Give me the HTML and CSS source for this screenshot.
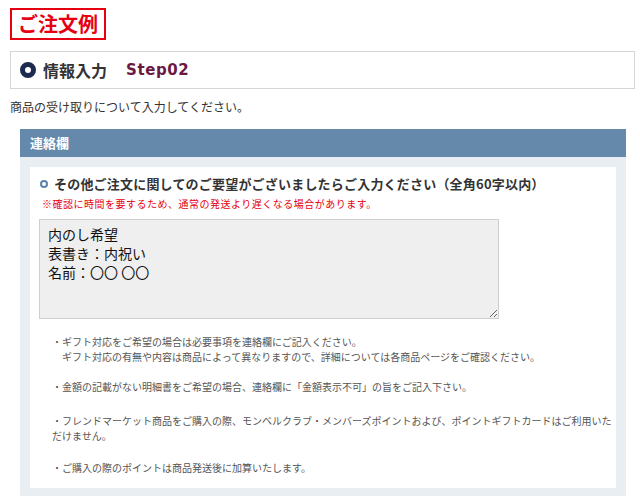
FILE: index.html
```html
<!DOCTYPE html>
<html lang="ja">
<head>
<meta charset="utf-8">
<link rel="stylesheet" href="styles.css">
</head>
<body>
<div class="page">
  <div class="title">ご注文例</div>
  <div class="step">
    <span class="step-icon"></span>
    <span class="step-name">情報入力</span>
    <span class="step-no">Step02</span>
  </div>
  <p class="lead">商品の受け取りについて入力してください。</p>
  <div class="panel">
    <div class="panel-head">連絡欄</div>
    <div class="panel-body">
      <div class="inner">
        <div class="q-title"><span class="dot"></span><span>その他ご注文に関してのご要望がございましたらご入力ください（全角60字以内）</span></div>
        <div class="q-note">※確認に時間を要するため、通常の発送より遅くなる場合があります。</div>
        <textarea class="memo">内のし希望
表書き：内祝い
名前：〇〇 〇〇</textarea>
        <div class="notes">
          <p class="n1">・ギフト対応をご希望の場合は必要事項を連絡欄にご記入ください。<br>　ギフト対応の有無や内容は商品によって異なりますので、詳細については各商品ページをご確認ください。</p>
          <p class="n2">・金額の記載がない明細書をご希望の場合、連絡欄に「金額表示不可」の旨をご記入下さい。</p>
          <p class="n3">・フレンドマーケット商品をご購入の際、モンベルクラブ・メンバーズポイントおよび、ポイントギフトカードはご利用いただけません。</p>
          <p class="n4">・ご購入の際のポイントは商品発送後に加算いたします。</p>
        </div>
      </div>
    </div>
  </div>
</div>
</body>
</html>
```
FILE: styles.css
```css
html, body {
  margin: 0;
  padding: 0;
  background: #fff;
}
body {
  font-family: "Noto Sans CJK JP", "Noto Sans", sans-serif;
  color: #333;
}
.page {
  padding: 8px 5px 0 10px;
}
.title {
  display: inline-block;
  border: 2px solid #e60012;
  color: #e60012;
  font-size: 20px;
  font-weight: bold;
  line-height: 28px;
  padding: 0 6px;
}
.step {
  margin-top: 11px;
  box-sizing: border-box;
  width: 625px;
  height: 38px;
  border: 1px solid #d6d6d6;
  display: flex;
  align-items: center;
  padding-left: 9px;
}
.step-icon {
  width: 16px;
  height: 16px;
  border-radius: 50%;
  box-sizing: border-box;
  border: 5px solid #1b2a4e;
  background: #fff;
  flex: none;
}
.step-name {
  margin-left: 7px;
  font-size: 16px;
  font-weight: bold;
  color: #333;
}
.step-no {
  margin-left: 19px;
  font-family: "DejaVu Sans", sans-serif;
  font-size: 15px;
  font-weight: bold;
  color: #6b1942;
  letter-spacing: 0.6px;
}
.lead {
  margin: 9px 0 0;
  font-size: 12px;
  line-height: 18px;
  color: #333;
}
.panel {
  margin: 13px 9px 0 10px;
}
.panel-head {
  background: #6489ab;
  color: #fff;
  font-size: 13px;
  font-weight: bold;
  height: 28px;
  line-height: 28px;
  padding-left: 10px;
}
.panel-body {
  background: #e9eef2;
  padding: 10px 10px 8px;
}
.inner {
  background: #fff;
  padding: 8px 8px 13px 9px;
}
.q-title {
  display: flex;
  align-items: center;
  font-size: 13px;
  letter-spacing: 0.2px;
  font-weight: bold;
  line-height: 18px;
  color: #333;
}
.dot {
  width: 8px;
  height: 8px;
  box-sizing: border-box;
  border: 2px solid #5b82a8;
  border-radius: 50%;
  margin-left: 1px;
  margin-right: 6px;
  background: #fff;
  flex: none;
}
.q-note {
  margin: 3px 0 0 3px;
  font-size: 10px;
  letter-spacing: 0.5px;
  line-height: 16px;
  color: #e60012;
}
.memo {
  display: block;
  margin-top: 7px;
  width: 460px;
  height: 100px;
  box-sizing: border-box;
  border: 1px solid #cfcfcf;
  background: #efefef;
  font-family: "Noto Sans CJK JP", "Noto Sans", sans-serif;
  font-size: 14px;
  line-height: 19px;
  color: #111;
  padding: 5px 8px 3px;
  resize: vertical;
}
.notes {
  margin-top: 15px;
  padding-left: 13px;
  width: 562px;
  font-size: 10px;
  line-height: 15px;
  color: #555;
}
.notes p {
  margin: 0;
}
.n1 { margin-bottom: 15px !important; }
.n2 { margin-bottom: 19px !important; }
.n3 { margin-bottom: 17px !important; }
```
